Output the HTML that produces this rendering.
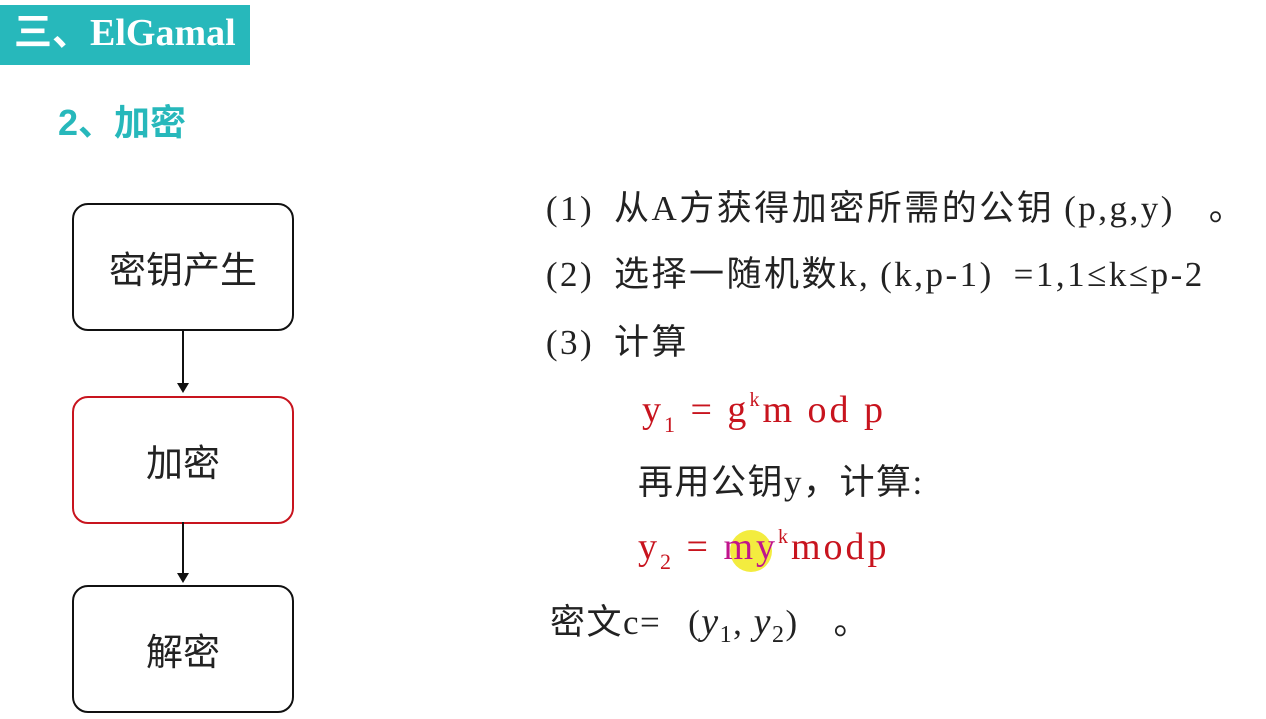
<!DOCTYPE html>
<html><head><meta charset="utf-8"><style>
body{margin:0;width:1266px;height:719px;background:#fff;position:relative;overflow:hidden;font-family:"Liberation Sans","Noto Sans CJK SC",sans-serif;}
.a{position:absolute;white-space:nowrap;line-height:1;}
.hdr{position:absolute;left:0;top:5px;width:250px;height:60px;background:#27b8bb;}
.box{position:absolute;left:72px;width:218px;height:124px;border:2px solid #111;border-radius:16px;display:flex;align-items:center;justify-content:center;font-size:37px;color:#222;font-family:"Noto Sans CJK SC",sans-serif;}
.t{font-size:35px;letter-spacing:2.5px;color:#222;font-family:"Liberation Serif","Noto Sans CJK SC",serif;}
.r{color:#c8141e;font-family:"Liberation Serif",serif;font-size:38px;letter-spacing:3px;}
.ln{position:absolute;left:182px;width:2px;background:#111;}
.ar{position:absolute;left:177px;width:0;height:0;border-left:6px solid transparent;border-right:6px solid transparent;border-top:10px solid #111;}
.o{display:inline-block;width:24px;text-align:right;}
.c{display:inline-block;width:34px;text-align:left;}
</style></head><body>
<div class="hdr"></div>
<div class="a" style="left:14px;top:14px;font-size:38px;color:#fff;font-weight:bold;font-family:'Liberation Serif','Noto Sans CJK SC',serif;">三、ElGamal</div>
<div class="a" style="left:58px;top:105px;font-size:36px;color:#27b8bb;font-weight:bold;font-family:'Liberation Sans','Noto Sans CJK SC',sans-serif;">2、加密</div>
<div class="box" style="top:203px;">密钥产生</div>
<div class="box" style="top:396px;border-color:#c8141e;">加密</div>
<div class="box" style="top:585px;">解密</div>
<div class="ln" style="top:330px;height:54px;"></div><div class="ar" style="top:383px;"></div>
<div class="ln" style="top:522px;height:52px;"></div><div class="ar" style="top:573px;"></div>
<div class="a t" style="left:536px;top:191px;"><span class="o">(</span>1<span class="c">)</span>从A方获得加密所需的公钥<span class="o">(</span>p,g,y<span class="c">)</span><span class="c" style="margin-left:14px">。</span></div>
<div class="a t" style="left:536px;top:257px;"><span class="o">(</span>2<span class="c">)</span>选择一随机数k,<span class="o">(</span>k,p-1<span class="c">)</span>=1,1≤k≤p-2</div>
<div class="a t" style="left:536px;top:325px;"><span class="o">(</span>3<span class="c">)</span>计算</div>
<div class="a r" style="left:642px;top:390px;">y<sub style="font-size:22px;vertical-align:-10px">1</sub> = g<sup style="font-size:20px;vertical-align:16px">k</sup>m od p</div>
<div class="a t" style="left:638px;top:465px;letter-spacing:1.5px">再用公钥y，计算:</div>
<div style="position:absolute;left:730px;top:530px;width:42px;height:42px;border-radius:50%;background:#f2ea2a;opacity:.9"></div>
<div class="a r" style="left:638px;top:527px;">y<sub style="font-size:22px;vertical-align:-10px">2</sub> = <span style="color:#c0148c">my</span><sup style="font-size:20px;vertical-align:16px">k</sup>modp</div>
<div class="a t" style="left:550px;top:603px;letter-spacing:1.5px">密文c=<span class="o" style="width:40px">(</span><i style="font-size:38px">y</i><sub style="font-size:24px">1</sub>, <i style="font-size:38px">y</i><sub style="font-size:24px">2</sub><span class="c">)</span><span class="c" style="margin-left:14px">。</span></div>
</body></html>
